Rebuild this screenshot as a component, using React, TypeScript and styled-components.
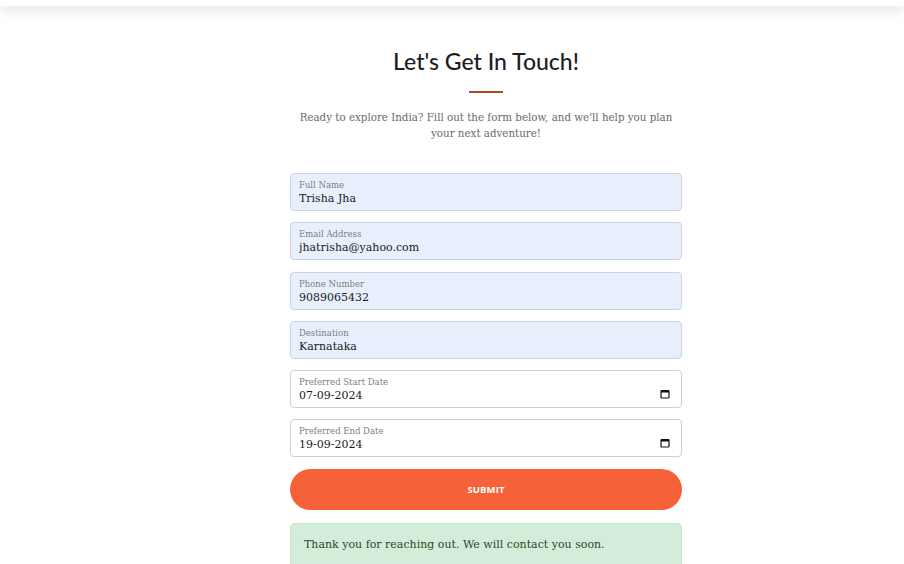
import styled, { createGlobalStyle } from 'styled-components';

const GlobalStyle = createGlobalStyle`
    body{
        margin:0;
        background:#fff;
        font-family: "DejaVu Serif", "Liberation Serif", serif;
    }
`;

const TopBar = styled.header`
    height:6px;
    background:#fff;
    box-shadow: 0 3px 12px rgba(0,0,0,0.16);
`;
const Section = styled.section`
    padding: 38px 0 0 68px;
    display:flex;
    flex-direction:column;
    align-items:center;
`;
const Title = styled.h1`
    margin:0;
    font-family: Lato, sans-serif;
    font-weight:500;
    font-size:23px;
    line-height:34px;
    color:#1d1d24;
`;
const Rule = styled.div`
    width:34px;
    height:2px;
    margin:13px 0 16px;
    background:#b4461f;
`;
const Intro = styled.p`
    margin:0 0 32px;
    width:380px;
    text-align:center;
    font-size:10.3px;
    line-height:16px;
    color:#6a6a6a;
`;
const Form = styled.form`
    width:392px;
    display:flex;
    flex-direction:column;
    gap:11.3px;
`;
const Field = styled.label<{$filled?: boolean}>`
    position:relative;
    display:flex;
    flex-direction:column;
    height:38px;
    box-sizing:border-box;
    padding:6px 8px 0;
    border:1px solid ${p => p.$filled ? '#c9d3e0' : '#cfcfcf'};
    border-radius:4px;
    background:${p => p.$filled ? '#e8f0fe' : '#fff'};
`;
const Label = styled.span`
    font-size:8.5px;
    line-height:11px;
    color:#808080;
`;
const Input = styled.input`
    border:0;
    padding:0;
    margin:0;
    background:transparent;
    font-family:inherit;
    font-size:11px;
    line-height:15px;
    color:#1a1a1a;
    outline:none;
`;
const CalIcon = styled.svg`
    position:absolute;
    right:11px;
    top:18px;
`;
const Submit = styled.button`
    height:41px;
    border:0;
    border-radius:21px;
    background:#f56138;
    color:#fff;
    font-family: "Open Sans", sans-serif;
    font-weight:700;
    font-size:9.5px;
    letter-spacing:0.1px;
`;
const Notice = styled.div`
    margin-top:1.5px;
    height:48px;
    box-sizing:border-box;
    padding:14px 13px 0;
    background:#d4edda;
    border:1px solid #c3e6cb;
    border-bottom:0;
    border-radius:5px 5px 0 0;
    font-size:11px;
    color:#1d4d26;
`;

interface IField{
    label:string;
    value:string;
    date?:boolean;
}

const fields: IField[] = [
    {label:'Full Name', value:'Trisha Jha'},
    {label:'Email Address', value:'jhatrisha@yahoo.com'},
    {label:'Phone Number', value:'9089065432'},
    {label:'Destination', value:'Karnataka'},
    {label:'Preferred Start Date', value:'07-09-2024', date:true},
    {label:'Preferred End Date', value:'19-09-2024', date:true},
];

function Calendar(){
    return (
        <CalIcon width="10" height="10" viewBox="0 0 10 10">
            <rect x="1" y="1.5" width="8" height="7.5" rx="0.8" fill="none" stroke="#111" strokeWidth="1.2"/>
            <rect x="1" y="1.5" width="8" height="2" fill="#111"/>
        </CalIcon>
    );
}

function App(){
    return (
        <>
            <GlobalStyle/>
            <TopBar/>
            <Section>
                <Title>Let's Get In Touch!</Title>
                <Rule/>
                <Intro>Ready to explore India? Fill out the form below, and we'll help you plan your next adventure!</Intro>
                <Form onSubmit={e => e.preventDefault()}>
                    {fields.map(f => (
                        <Field key={f.label} $filled={!f.date}>
                            <Label>{f.label}</Label>
                            <Input readOnly value={f.value}/>
                            {f.date && <Calendar/>}
                        </Field>
                    ))}
                    <Submit type="submit">SUBMIT</Submit>
                    <Notice>Thank you for reaching out. We will contact you soon.</Notice>
                </Form>
            </Section>
        </>
    );
}
export default App;
